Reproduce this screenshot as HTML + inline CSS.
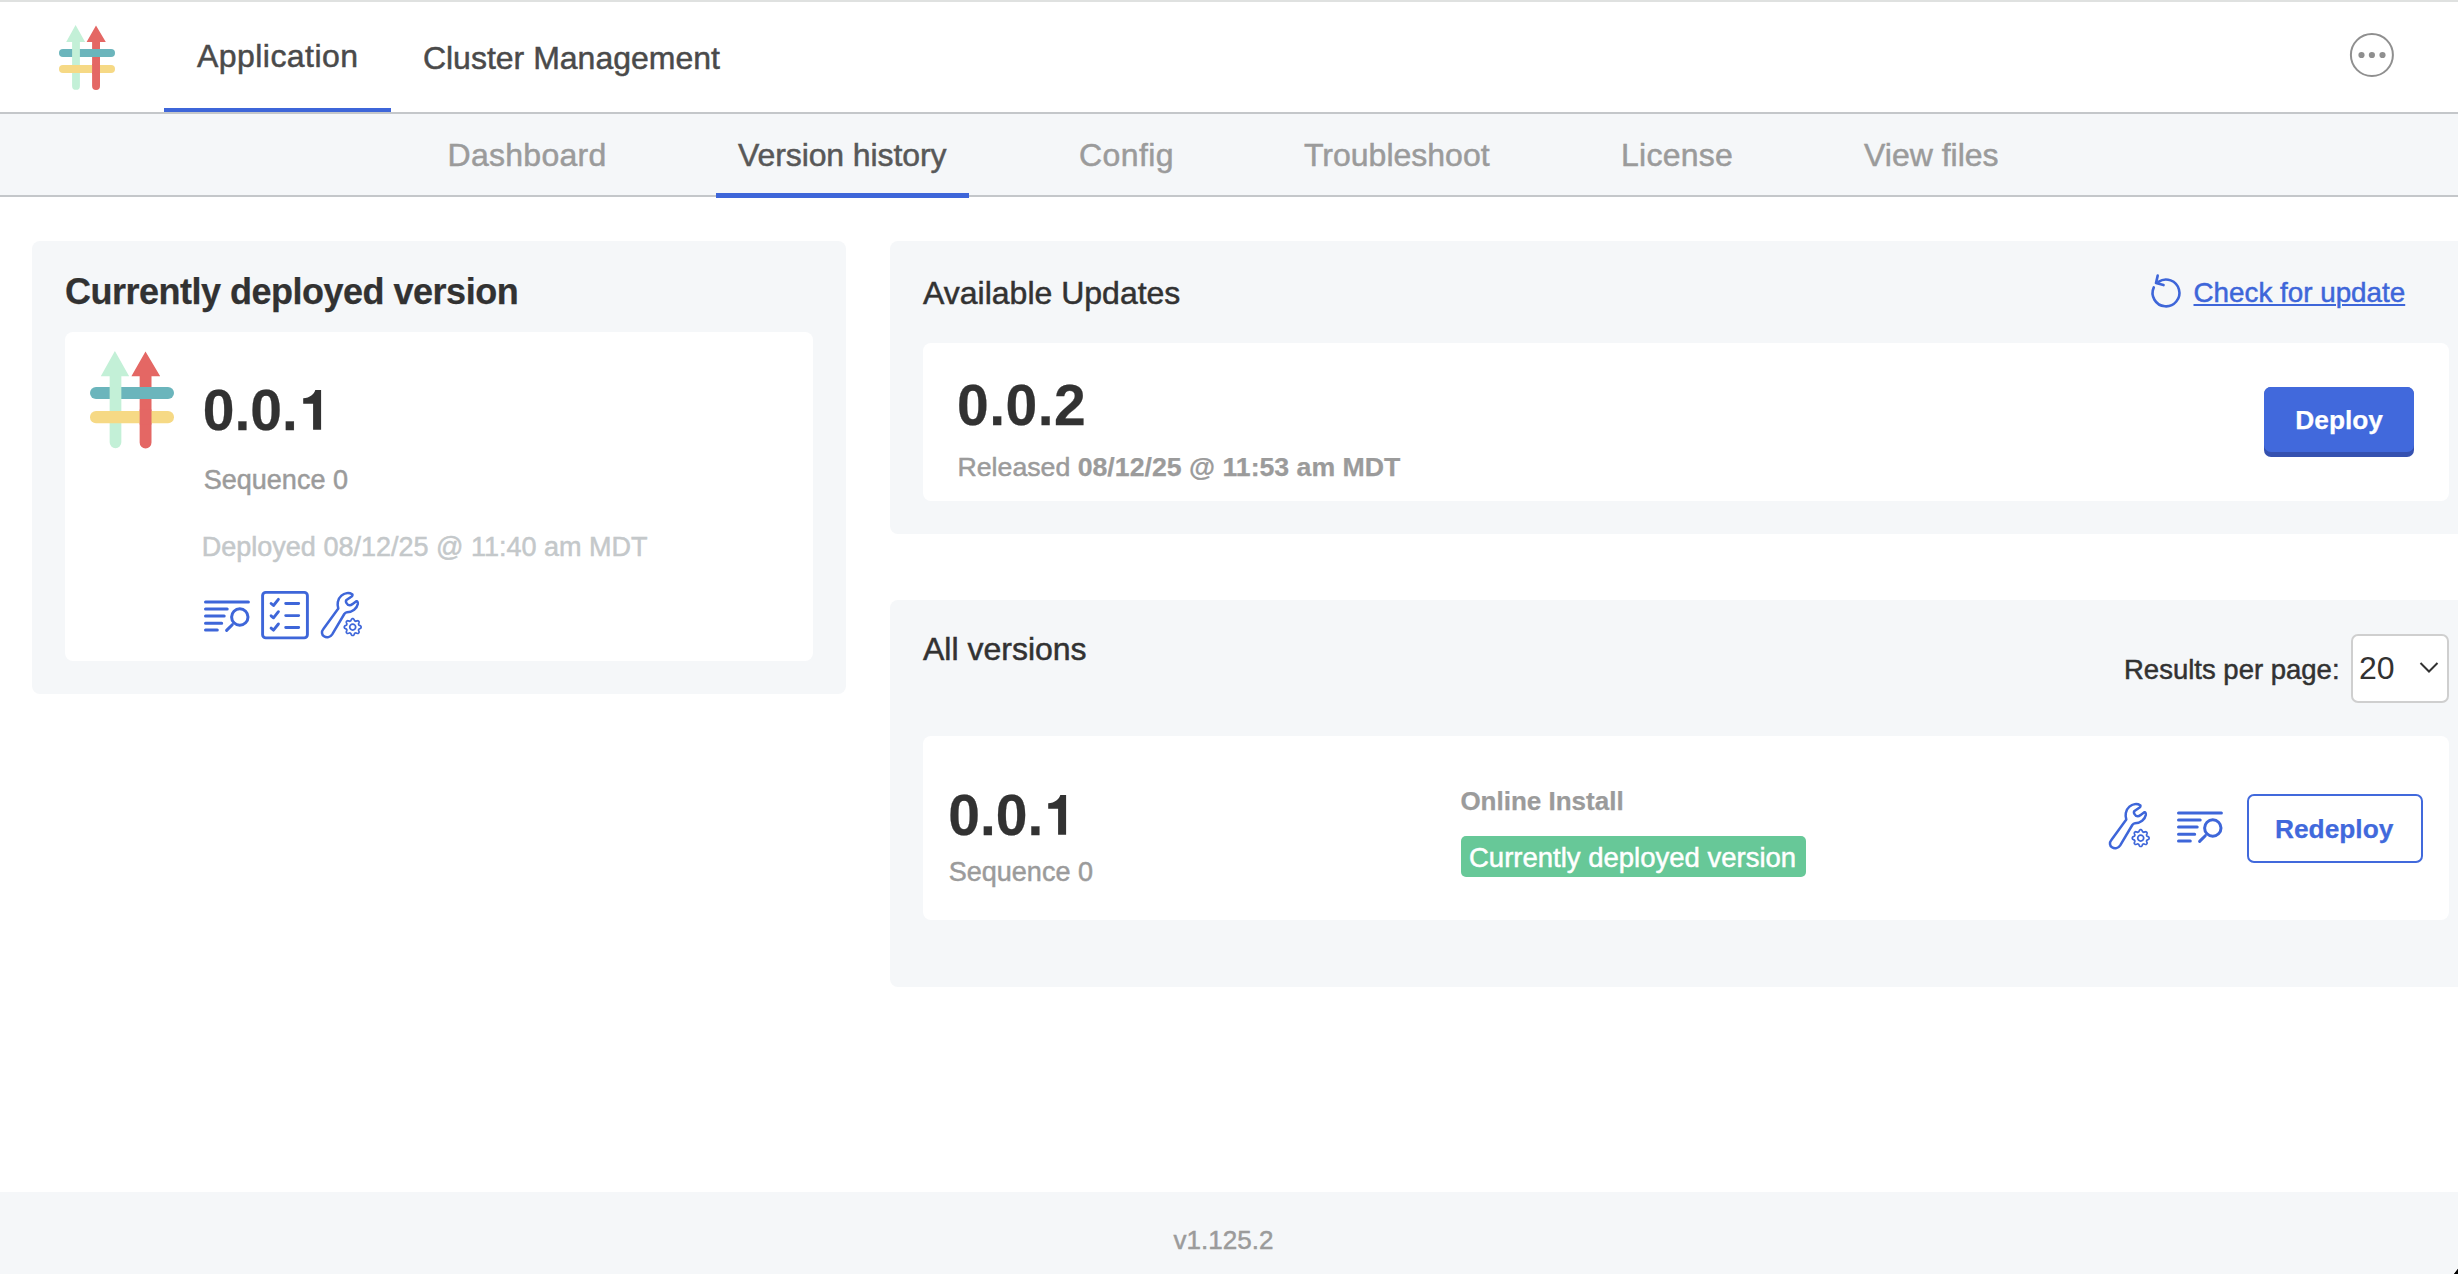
<!DOCTYPE html>
<html>
<head>
<meta charset="utf-8">
<style>
html,body{margin:0;padding:0;width:2458px;height:1274px;overflow:hidden;background:#fff;}
body{position:relative;font-family:"Liberation Sans",sans-serif;}
.a{position:absolute;white-space:nowrap;line-height:1;-webkit-text-stroke:0.5px currentColor;}
.a[style*="font-weight:700"],.a b{-webkit-text-stroke-width:0.25px;}
.bx{position:absolute;}
svg{position:absolute;overflow:visible;}
</style>
</head>
<body>
<svg width="0" height="0" style="position:absolute">
<defs>
<symbol id="logo" viewBox="0 0 56 65" overflow="visible">
<path d="M37 0.4 L46.8 16.9 L41 16.9 L41 61 A3.95 3.95 0 0 1 33.1 61 L33.1 16.9 L27.6 16.9 Z" fill="#e46764"/>
<rect x="0" y="24" width="56" height="8" rx="4" fill="#6bb5bc"/>
<path d="M16.6 0 L26.1 16.9 L20.9 16.9 L20.9 60.9 A3.9 3.9 0 0 1 13.1 60.9 L13.1 16.9 L7.2 16.9 Z" fill="#c3f0d7"/>
<rect x="0" y="40" width="56" height="8.1" rx="4" fill="#f6d985"/>
<rect x="33.1" y="39" width="7.9" height="10" fill="#e46764"/>
</symbol>
<symbol id="logs" viewBox="0 0 50 44" overflow="visible">
<g fill="none" stroke="#3e66d9" stroke-width="3" stroke-linecap="round">
<path d="M3.5 13H46.4M3.5 20.1H25.2M3.5 27H22.2M3.5 34.2H19.7M3.5 41.1H15.3"/>
<circle cx="37.8" cy="28" r="8.2"/>
<path d="M30.3 35.7L24.6 41.4"/>
</g>
</symbol>
<symbol id="wrench" viewBox="0 0 55 60" overflow="visible">
<path fill="none" stroke="#3e66d9" stroke-width="2.5" stroke-linejoin="round" d="M23.3 23.5C22 20 22.3 14 26.4 10.6C29.5 8 34 7.3 37.2 9.2C37.8 9.8 37.4 10.8 36.6 11.4L31.5 15C30.2 16.2 31.5 20.2 34.8 20.3C35.8 20.3 37 19.4 38 18.7L41.3 16.3C42.5 16 43 17.5 42.8 19C42 23.5 37.5 27 32 27.3C30.8 27.4 29.8 28.3 29.3 29L17.2 49.3C15.3 52.3 11.7 53.1 9 51.3C6.6 49.7 6.3 46.6 8.2 44.3Z"/>
<g transform="translate(37.7 42.1)" fill="none" stroke="#3e66d9" stroke-width="1.7" stroke-linejoin="round">
<path d="M8.4 0.0 L8.4 0.5 L8.0 1.1 L7.3 1.5 L6.6 1.8 L6.2 2.1 L6.0 2.5 L5.8 2.9 L5.9 3.4 L6.2 4.1 L6.4 4.9 L6.3 5.5 L5.9 5.9 L5.5 6.3 L4.9 6.4 L4.1 6.2 L3.4 5.9 L2.9 5.8 L2.5 6.0 L2.1 6.2 L1.8 6.6 L1.5 7.3 L1.1 8.0 L0.5 8.4 L0.0 8.4 L-0.5 8.4 L-1.1 8.0 L-1.5 7.3 L-1.8 6.6 L-2.1 6.2 L-2.5 6.0 L-2.9 5.8 L-3.4 5.9 L-4.1 6.2 L-4.9 6.4 L-5.5 6.3 L-5.9 5.9 L-6.3 5.5 L-6.4 4.9 L-6.2 4.1 L-5.9 3.4 L-5.8 2.9 L-6.0 2.5 L-6.2 2.1 L-6.6 1.8 L-7.3 1.5 L-8.0 1.1 L-8.4 0.5 L-8.4 0.0 L-8.4 -0.5 L-8.0 -1.1 L-7.3 -1.5 L-6.6 -1.8 L-6.2 -2.1 L-6.0 -2.5 L-5.8 -2.9 L-5.9 -3.4 L-6.2 -4.1 L-6.4 -4.9 L-6.3 -5.5 L-5.9 -5.9 L-5.5 -6.3 L-4.9 -6.4 L-4.1 -6.2 L-3.4 -5.9 L-2.9 -5.8 L-2.5 -6.0 L-2.1 -6.2 L-1.8 -6.6 L-1.5 -7.3 L-1.1 -8.0 L-0.5 -8.4 L-0.0 -8.4 L0.5 -8.4 L1.1 -8.0 L1.5 -7.3 L1.8 -6.6 L2.1 -6.2 L2.5 -6.0 L2.9 -5.8 L3.4 -5.9 L4.1 -6.2 L4.9 -6.4 L5.5 -6.3 L5.9 -5.9 L6.3 -5.5 L6.4 -4.9 L6.2 -4.1 L5.9 -3.4 L5.8 -2.9 L6.0 -2.5 L6.2 -2.1 L6.6 -1.8 L7.3 -1.5 L8.0 -1.1 L8.4 -0.5Z"/>
<circle cx="0" cy="0" r="3"/>
</g>
</symbol>
</defs>
</svg>

<!-- top header -->
<div class="bx" style="left:0;top:0;width:2458px;height:2px;background:#dfe1e0"></div>
<svg style="left:58.9px;top:24.9px" width="56" height="65"><use href="#logo"/></svg>
<div class="a" style="left:197px;top:39.9px;font-size:32px;color:#4a4a4a;letter-spacing:0.45px">Application</div>
<div class="a" style="left:422.9px;top:41.5px;font-size:32px;color:#4a4a4a">Cluster Management</div>
<div class="bx" style="left:164px;top:108px;width:227px;height:4px;background:#3e66d9"></div>
<div class="bx" style="left:0;top:112px;width:2458px;height:2px;background:#c4c7ca"></div>
<svg style="left:2340px;top:23px" width="64" height="64" viewBox="0 0 64 64">
<circle cx="31.9" cy="32" r="21" fill="none" stroke="#8f8f8f" stroke-width="2"/>
<circle cx="21.5" cy="32" r="3.1" fill="#8f8f8f"/><circle cx="31.9" cy="32" r="3.1" fill="#8f8f8f"/><circle cx="42.5" cy="32" r="3.1" fill="#8f8f8f"/>
</svg>

<!-- sub nav -->
<div class="bx" style="left:0;top:114px;width:2458px;height:81px;background:#f5f7f9"></div>
<div class="bx" style="left:0;top:195px;width:2458px;height:2px;background:#c4c7ca"></div>
<div class="a" style="left:447.5px;top:139.1px;font-size:32px;color:#9b9b9b;letter-spacing:0.28px">Dashboard</div>
<div class="a" style="left:738px;top:139.1px;font-size:32px;color:#585858;letter-spacing:-0.1px">Version history</div>
<div class="a" style="left:1079px;top:139.1px;font-size:32px;color:#9b9b9b;letter-spacing:0.4px">Config</div>
<div class="a" style="left:1304px;top:139.1px;font-size:32px;color:#9b9b9b">Troubleshoot</div>
<div class="a" style="left:1621px;top:139.1px;font-size:32px;color:#9b9b9b;letter-spacing:0.25px">License</div>
<div class="a" style="left:1864px;top:139.1px;font-size:32px;color:#9b9b9b">View files</div>
<div class="bx" style="left:716px;top:193px;width:253px;height:5px;background:#3e66d9"></div>

<!-- left card -->
<div class="bx" style="left:32px;top:241px;width:814px;height:453px;background:#f5f7f9;border-radius:8px"></div>
<div class="a" style="left:65px;top:273.8px;font-size:36px;font-weight:700;color:#323232;letter-spacing:-0.5px">Currently deployed version</div>
<div class="bx" style="left:65px;top:332px;width:748px;height:329px;background:#fff;border-radius:8px"></div>
<svg style="left:90.4px;top:350.5px" width="84" height="97.5" viewBox="0 0 56 65"><use href="#logo" width="56" height="65"/></svg>
<div class="a" style="left:202.8px;top:381.9px;font-size:57px;font-weight:700;color:#323232">0.0.</div>
<svg style="left:295px;top:380px" width="40" height="60" viewBox="0 0 40 60"><path d="M26.1 10.1L20.3 10.1C19.2 14.2 15 18.1 8.2 18.3L8.2 23.8L18.1 23.8L18.1 49.7L26.1 49.7Z" fill="#323232"/></svg>
<div class="a" style="left:203.8px;top:467.2px;font-size:27px;color:#9b9b9b">Sequence 0</div>
<div class="a" style="left:201.8px;top:533.9px;font-size:27px;color:#c4c8ca">Deployed 08/12/25 @ 11:40 am MDT</div>
<svg style="left:202px;top:589px" width="50" height="44" viewBox="0 0 50 44"><use href="#logs"/></svg>
<svg style="left:259px;top:589px" width="52" height="52" viewBox="0 0 52 52">
<g fill="none" stroke="#3e66d9" stroke-width="2.9" stroke-linecap="round" stroke-linejoin="round">
<rect x="3.6" y="3.4" width="44.8" height="45.5" rx="3.2"/>
<path d="M12.1 14.5L14.5 16.5L19.4 10.4M12.1 26.8L14.5 28.8L19.4 22.7M12.1 39.1L14.5 41.1L19.4 35"/>
<path d="M26.7 14.5H39.7M26.7 26.6H39.7M26.7 38.5H39.7"/>
</g>
</svg>
<svg style="left:315px;top:585px" width="55" height="60" viewBox="0 0 55 60"><use href="#wrench"/></svg>

<!-- available updates -->
<div class="bx" style="left:890px;top:241px;width:1600px;height:293px;background:#f5f7f9;border-radius:8px"></div>
<div class="a" style="left:923px;top:276.9px;font-size:32px;color:#323232">Available Updates</div>
<svg style="left:2140px;top:265px" width="60" height="55" viewBox="0 0 60 55">
<g fill="none" stroke="#3e66d9" stroke-width="2.6" stroke-linecap="round" stroke-linejoin="round">
<path d="M18.4 16.9A13.4 13.4 0 1 1 13.8 22.4"/>
<path d="M17.7 10.6L16 18.1L23.5 20.1"/>
</g>
</svg>
<div class="a" style="left:2193.5px;top:279.3px;font-size:27.8px;color:#3e66d9;text-decoration:underline;text-underline-offset:2px;text-decoration-thickness:2px">Check for update</div>
<div class="bx" style="left:923px;top:343px;width:1526px;height:158px;background:#fff;border-radius:8px"></div>
<div class="a" style="left:957px;top:376.9px;font-size:57px;font-weight:700;color:#323232;letter-spacing:0.5px">0.0.2</div>
<div class="a" style="left:957.5px;top:454.1px;font-size:26.7px;color:#9b9b9b">Released <b>08/12/25 @ 11:53 am MDT</b></div>
<div class="bx" style="left:2264px;top:387px;width:150px;height:70px;background:#3551b0;border-radius:7px"></div>
<div class="bx" style="left:2264px;top:387px;width:150px;height:65px;background:#4169dc;border-radius:7px"></div>
<div class="a" style="left:2295.3px;top:407px;font-size:26.3px;font-weight:700;color:#fff">Deploy</div>

<!-- all versions -->
<div class="bx" style="left:890px;top:600px;width:1600px;height:387px;background:#f5f7f9;border-radius:8px"></div>
<div class="a" style="left:923px;top:632.7px;font-size:32px;color:#323232">All versions</div>
<div class="a" style="left:2124px;top:656.1px;font-size:27.5px;color:#323232">Results per page:</div>
<div class="bx" style="left:2351px;top:634px;width:94px;height:65px;border:2px solid #cfcfcf;border-radius:7px;background:#fff"></div>
<div class="a" style="left:2359px;top:651.9px;font-size:32px;color:#323232;-webkit-text-stroke-width:0">20</div>
<svg style="left:2418px;top:660px" width="22" height="16" viewBox="0 0 22 16"><path d="M2.5 3L11 11.5L19.5 3" fill="none" stroke="#323232" stroke-width="2"/></svg>
<div class="bx" style="left:923px;top:736px;width:1526px;height:184px;background:#fff;border-radius:8px"></div>
<div class="a" style="left:948.2px;top:786.8px;font-size:57px;font-weight:700;color:#323232">0.0.</div>
<svg style="left:1040.4px;top:784.9px" width="40" height="60" viewBox="0 0 40 60"><path d="M26.1 10.1L20.3 10.1C19.2 14.2 15 18.1 8.2 18.3L8.2 23.8L18.1 23.8L18.1 49.7L26.1 49.7Z" fill="#323232"/></svg>
<div class="a" style="left:948.8px;top:859px;font-size:27px;color:#9b9b9b">Sequence 0</div>
<div class="a" style="left:1460.4px;top:788.1px;font-size:26px;font-weight:700;color:#9b9b9b">Online Install</div>
<div class="bx" style="left:1461px;top:836px;width:345px;height:41px;background:#67c898;border-radius:5px"></div>
<div class="a" style="left:1469px;top:844.2px;font-size:27.5px;color:#fff">Currently deployed version</div>
<svg style="left:2102.6px;top:795.9px" width="55" height="60" viewBox="0 0 55 60"><use href="#wrench"/></svg>
<svg style="left:2175px;top:799.5px" width="50" height="44" viewBox="0 0 50 44"><use href="#logs"/></svg>
<div class="bx" style="left:2247px;top:794px;width:172px;height:65px;border:2px solid #4169dc;border-radius:7px"></div>
<div class="a" style="left:2275px;top:816px;font-size:26.3px;font-weight:700;color:#4169dc">Redeploy</div>

<!-- footer -->
<div class="bx" style="left:0;top:1192px;width:2458px;height:82px;background:#f5f7f9"></div>
<div class="a" style="left:1173.6px;top:1227.3px;font-size:26px;color:#9b9b9b">v1.125.2</div>
<svg style="left:2450px;top:1264px" width="8" height="10" viewBox="0 0 8 10"><path d="M8 4.5L8 10L3.8 10Z" fill="#000"/><path d="M3.2 9.6L7.8 3.8" stroke="#fff" stroke-width="0.8"/></svg>
</body>
</html>
